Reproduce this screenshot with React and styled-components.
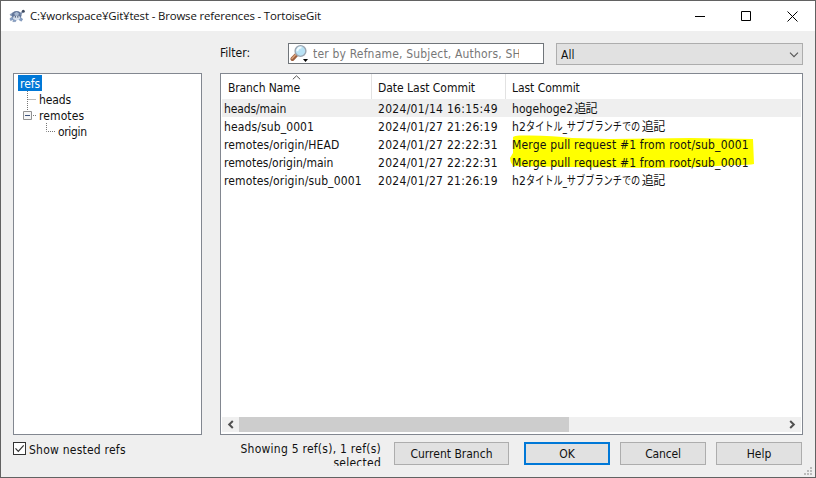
import React from 'react';
import styled, { createGlobalStyle } from 'styled-components';

const Global = createGlobalStyle`
  * { box-sizing: border-box; }
  body { margin: 0; background: #5c5a5b; overflow: hidden; }
`;

const Window = styled.div`
  width: 816px;
  height: 478px;
  display: flex;
  flex-direction: column;
  border: 1px solid #626262;
  background: #efefef;
  color: #111;
  font: 12px/16px 'DejaVu Sans Condensed', 'Noto Sans CJK JP', sans-serif;
  white-space: nowrap;
  position: relative;
`;

const TitleBar = styled.header`
  height: 30px;
  display: flex;
  align-items: center;
  background: #fff;
  padding: 0 0 0 8px;
`;

const Title = styled.h1`
  flex: 1;
  margin: 0 0 1px 4px;
  font: 400 11.4px/16px 'Open Sans', 'Noto Sans CJK JP', sans-serif;
  letter-spacing: -0.14px;
`;

const Caption = styled.span`
  width: 46px;
  display: flex;
  justify-content: center;
  svg { display: block; }
`;

const Track = styled.span`
  letter-spacing: ${(p) => p.$by}px;
`;

const FilterBar = styled.div`
  height: 42px;
  display: flex;
  align-items: flex-start;
  padding: 12px 12px 0 219px;
`;

const FilterLabel = styled.label`
  width: 68px;
  margin-top: 2px;
`;

const SearchField = styled.div`
  width: 256px;
  height: 21px;
  display: flex;
  align-items: center;
  border: 1px solid #70757a;
  background: #fff;
  color: #777;
`;

const SearchText = styled.span`
  width: 206px;
  margin-left: 5px;
  overflow: hidden;
  letter-spacing: 0.18px;
`;

const Select = styled.div`
  width: 247px;
  height: 22px;
  margin-left: 12px;
  padding: 1px 3px 0 4px;
  display: flex;
  align-items: center;
  justify-content: space-between;
  border: 1px solid #adadad;
  background: #e1e1e1;
`;

const Panes = styled.main`
  height: 362px;
  display: grid;
  grid-template-columns: 189px 583px;
  column-gap: 18px;
  padding-left: 12px;
`;

const Pane = styled.section`
  border: 1px solid #828790;
  background: #fff;
`;

const TreePane = styled(Pane)`
  padding: 1px 0 0 4px;
`;

const TreeRow = styled.div`
  height: 16px;
  display: flex;
  align-items: center;
  padding-left: ${(p) => p.$indent}px;
  svg { display: block; flex: none; }
`;

const TreeLabel = styled.span`
  height: 16px;
  padding: 0 2px;
  line-height: 18px;
  background: ${(p) => (p.$selected ? '#0078d7' : 'transparent')};
  color: ${(p) => (p.$selected ? '#fff' : 'inherit')};
`;

const ListPane = styled(Pane)`
  display: flex;
  flex-direction: column;
  padding: 0 1px 2px;
`;

const HeaderRow = styled.div`
  height: 25px;
  display: grid;
  grid-template-columns: 150px 134px 1fr;
`;

const HeaderCell = styled.div`
  position: relative;
  padding: 6px 0 0 6px;
  border-right: 1px solid ${(p) => (p.$last ? 'transparent' : '#e2e2e2')};
`;

const SortMark = styled.svg`
  position: absolute;
  top: 1px;
  left: 70px;
`;

const Row = styled.div`
  height: 18px;
  display: grid;
  grid-template-columns: 154px 134px 1fr;
  line-height: 20px;
  padding-left: 2px;
  background: ${(p) => (p.$selected ? '#efefef' : 'transparent')};
`;

const Commit = styled.span`
  position: relative;
  z-index: 0;
  display: flex;
`;

const Marker = styled.svg`
  position: absolute;
  z-index: -1;
  left: -2px;
  top: 0;
`;

const Kana = styled.span`
  width: 115px;
  transform: scaleX(0.765);
  transform-origin: left;
`;

const Kanji = styled.span`
  margin-left: 1px;
`;

const Scrollbar = styled.div`
  height: 15px;
  margin-top: auto;
  display: flex;
  align-items: center;
  background: #f0f0f0;
`;

const Thumb = styled.div`
  width: 330px;
  height: 15px;
  margin: 0 auto 0 0;
  background: #cdcdcd;
`;

const ArrowBox = styled.span`
  width: 17px;
  display: flex;
  justify-content: center;
`;

const Footer = styled.footer`
  height: 41px;
  display: flex;
  align-items: flex-start;
  padding: 7px 0 0 12px;
`;

const CheckLabel = styled.label`
  width: 208px;
  display: flex;
  align-items: flex-start;
  gap: 3px;
`;

const CheckBox = styled.span`
  width: 13px;
  height: 13px;
  border: 1px solid #333;
  background: #fff;
  svg { display: block; }
`;

const Status = styled.div`
  width: 160px;
  height: 24px;
  overflow: hidden;
  text-align: right;
  line-height: 14px;
`;

const Button = styled.button`
  width: ${(p) => (p.$wide ? 115 : 86)}px;
  height: 23px;
  margin: 0 0 0 ${(p) => p.$gap || 10}px;
  padding: 0;
  border: ${(p) => (p.$primary ? '2px solid #0078d7' : '1px solid #adadad')};
  background: #e1e1e1;
  color: inherit;
  font: inherit;
`;

const Grip = styled.svg`
  position: absolute;
  right: 2px;
  bottom: 1px;
`;

const TurtleIcon = () => (
  <svg width="17" height="15" viewBox="0 0 17 15">
    <path d="M0.6 5.2 L3 4 L4.4 6 L2 7.4Z" fill="#8fa3c0" />
    <ellipse cx="7.6" cy="6" rx="5" ry="4" fill="#64779a" />
    <path d="M5.2 4.4 L7.6 2.8 L10 4.4 L9.2 6.2 H6Z" fill="#a9bad2" />
    <path d="M3.6 8 L1 9.4 L1.6 11.6 L4.4 10.4Z M11 8 L13.6 10 L12.4 12.2 L9.6 10.6Z M5 10 L3.8 12.6 H6.6 L7.4 10.6Z" fill="#86a0c6" stroke="#6178a0" strokeWidth=".5" />
    <ellipse cx="7.6" cy="8.8" rx="3.4" ry="2.4" fill="#d5dfec" />
    <path d="M5.8 7.9 H7 M8.2 7.9 H9.4" stroke="#34435f" strokeWidth="1.2" />
    <path d="M11.4 5.6 L13.4 3" stroke="#8093b1" strokeWidth="1.3" />
    <circle cx="14.3" cy="2.3" r="1.5" fill="#3f4b60" />
  </svg>
);

const SearchIcon = () => (
  <svg width="19" height="19" viewBox="0 0 19 19">
    <path d="M3.4 15 L7.8 10.4" stroke="#9b6040" strokeWidth="4" strokeLinecap="round" />
    <path d="M3 14.4 L7.2 10" stroke="#dba27b" strokeWidth="1.5" strokeLinecap="round" />
    <circle cx="11.5" cy="7" r="5.4" fill="#b9e2f5" stroke="#9ca6b1" strokeWidth="1.4" />
    <path d="M8.4 7.2 A3.5 3.5 0 0 1 12.5 3.5" stroke="#f2fcff" strokeWidth="2" fill="none" />
    <path d="M14 15 H19 L16.5 18Z" fill="#000" />
  </svg>
);

const Chevron = ({ flip }) => (
  <svg width="7" height="9" viewBox="0 0 7 9">
    <path d={flip ? 'M1.2 1 L4.8 4.5 L1.2 8' : 'M5.8 1 L2.2 4.5 L5.8 8'} fill="none" stroke="#505050" strokeWidth="2" />
  </svg>
);

const dots = { stroke: '#777', strokeDasharray: '1 1', fill: 'none' };

const refs = [
  { name: 'heads/main', n: -0.1, date: '2024/01/14 16:15:49', text: 'hogehoge2', selected: true },
  { name: 'heads/sub_0001', n: 0.12, date: '2024/01/27 21:26:19', text: 'h2', kana: true },
  { name: 'remotes/origin/HEAD', n: 0.12, date: '2024/01/27 22:22:31', merge: true, mark: true },
  { name: 'remotes/origin/main', n: 0, date: '2024/01/27 22:22:31', merge: true },
  { name: 'remotes/origin/sub_0001', n: 0.13, date: '2024/01/27 21:26:19', text: 'h2', kana: true },
];

export default function App() {
  return (
    <>
      <Global />
      <Window>
        <TitleBar>
          <TurtleIcon />
          <Title>C:¥workspace¥Git¥test - Browse references - TortoiseGit</Title>
          <Caption><svg width="10" height="10"><path d="M0 5.5H10" stroke="#000" /></svg></Caption>
          <Caption><svg width="10" height="10"><path d="M.5 .5H9.5V9.5H.5Z" fill="none" stroke="#000" /></svg></Caption>
          <Caption><svg width="11" height="11"><path d="M.5 .5L10.5 10.5M10.5 .5L.5 10.5" stroke="#000" /></svg></Caption>
        </TitleBar>

        <FilterBar>
          <FilterLabel>Filter:</FilterLabel>
          <SearchField>
            <SearchIcon />
            <SearchText>ter by Refname, Subject, Authors, SH</SearchText>
          </SearchField>
          <Select>
            All
            <svg width="10" height="6"><path d="M1 .7L5 4.7L9 .7" fill="none" stroke="#555" strokeWidth="1.1" /></svg>
          </Select>
        </FilterBar>

        <Panes>
          <TreePane>
            <TreeRow $indent={0}><TreeLabel $selected>refs</TreeLabel></TreeRow>
            <TreeRow $indent={9}>
              <svg width="10" height="16"><path d="M.5 0V16M.5 8.5H9" {...dots} /></svg>
              <TreeLabel><Track $by={-0.1}>heads</Track></TreeLabel>
            </TreeRow>
            <TreeRow $indent={5}>
              <svg width="14" height="16">
                <path d="M4.5 0V4M10 8.5H13" {...dots} />
                <path d="M.5 4.5H8.5V12.5H.5Z" fill="#f5f5f5" stroke="#919191" />
                <path d="M2 8.5H7" stroke="#3c527c" />
              </svg>
              <TreeLabel><Track $by={0.1}>remotes</Track></TreeLabel>
            </TreeRow>
            <TreeRow $indent={28}>
              <svg width="10" height="16"><path d="M.5 0V8.5H9" {...dots} /></svg>
              <TreeLabel><Track $by={-0.35}>origin</Track></TreeLabel>
            </TreeRow>
          </TreePane>

          <ListPane>
            <HeaderRow>
              <HeaderCell>
                <Track $by={-0.12}>Branch Name</Track>
                <SortMark width="9" height="5"><path d="M.8 4.3L4.5 .8L8.2 4.3" fill="none" stroke="#555" /></SortMark>
              </HeaderCell>
              <HeaderCell><Track $by={-0.03}>Date Last Commit</Track></HeaderCell>
              <HeaderCell $last><Track $by={-0.05}>Last Commit</Track></HeaderCell>
            </HeaderRow>
            {refs.map((r) => (
              <Row key={r.name} $selected={r.selected}>
                <Track $by={r.n}>{r.name}</Track>
                <Track $by={0.3}>{r.date}</Track>
                <Commit>
                  {r.mark && (
                    <Marker width="246" height="34">
                      <path d="M3 2 Q5 0 12 .5 Q40 0 62 3 L100 4 L180 3 L243 4 L244 29 Q240 30 225 30 L190 32 L140 33 L60 32 L3 31 Q0 27 0 23 L3 18Z" fill="#ff0" />
                    </Marker>
                  )}
                  {r.merge ? <Track $by={0.17}>Merge pull request #1 from root/sub_0001</Track> : <Track $by={0.05}>{r.text}</Track>}
                  {r.kana && <Kana>タイトル_サブブランチでの</Kana>}
                  {!r.merge && <Kanji><Track $by={-0.6}>追記</Track></Kanji>}
                </Commit>
              </Row>
            ))}
            <Scrollbar>
              <ArrowBox><Chevron /></ArrowBox>
              <Thumb />
              <ArrowBox><Chevron flip /></ArrowBox>
            </Scrollbar>
          </ListPane>
        </Panes>

        <Footer>
          <CheckLabel>
            <CheckBox><svg width="11" height="11"><path d="M1.5 5.3L4.3 8.3L9.7 2.3" fill="none" stroke="#333" strokeWidth="1.2" /></svg></CheckBox>
            <Track $by={0.23}>Show nested refs</Track>
          </CheckLabel>
          <Status>
            <Track $by={0.25}>Showing 5 ref(s), 1 ref(s)<br />selected</Track>
          </Status>
          <Button $wide $gap={13}>Current Branch</Button>
          <Button $primary $gap={15}>OK</Button>
          <Button><Track $by={-0.15}>Cancel</Track></Button>
          <Button>Help</Button>
        </Footer>
        <Grip width="9" height="9">
          <path d="M6 0h2v2h-2zM3 3h2v2h-2zM6 3h2v2h-2zM0 6h2v2h-2zM3 6h2v2h-2zM6 6h2v2h-2z" fill="#bbb" />
        </Grip>
      </Window>
    </>
  );
}
